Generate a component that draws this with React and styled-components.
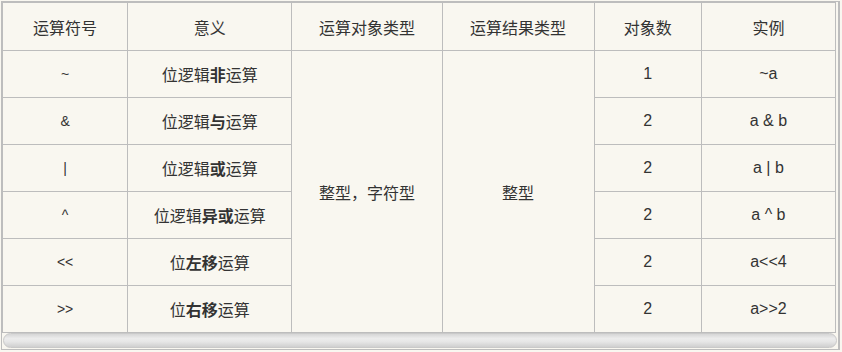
import React from "react";
import styled, { createGlobalStyle } from "styled-components";

const GlobalStyle = createGlobalStyle`
    html, body {
        margin: 0;
        padding: 0;
        background: #f9f7f0;
    }
    body {
        font-family: "Liberation Sans", "Noto Sans CJK SC", sans-serif;
        color: #333;
    }
`;

const columns = [125, 164, 150, 152, 107, 134];

const rows = [
    { op: "~", name: ["位逻辑", "非", "运算"], count: "1", sample: "~a" },
    { op: "&", name: ["位逻辑", "与", "运算"], count: "2", sample: "a & b" },
    { op: "|", name: ["位逻辑", "或", "运算"], count: "2", sample: "a | b" },
    { op: "^", name: ["位逻辑", "异或", "运算"], count: "2", sample: "a ^ b" },
    { op: "<<", name: ["位", "左移", "运算"], count: "2", sample: "a<<4" },
    { op: ">>", name: ["位", "右移", "运算"], count: "2", sample: "a>>2" },
];

const App = () => {
    return (
        <>
            <GlobalStyle />
            <Wrapper>
                <Table>
                    <colgroup>
                        {columns.map((w, i) => (
                            <col key={i} style={{ width: w }} />
                        ))}
                    </colgroup>
                    <thead>
                        <tr>
                            <Head>运算符号</Head>
                            <Head>意义</Head>
                            <Head>运算对象类型</Head>
                            <Head>运算结果类型</Head>
                            <Head>对象数</Head>
                            <Head>实例</Head>
                        </tr>
                    </thead>
                    <tbody>
                        {rows.map((row, i) => (
                            <tr key={row.op}>
                                <Cell small>{row.op}</Cell>
                                <Cell>
                                    {row.name[0]}
                                    <b>{row.name[1]}</b>
                                    {row.name[2]}
                                </Cell>
                                {i === 0 && (
                                    <>
                                        <Cell rowSpan={rows.length}>整型，字符型</Cell>
                                        <Cell rowSpan={rows.length}>整型</Cell>
                                    </>
                                )}
                                <Cell>{row.count}</Cell>
                                <Cell>{row.sample}</Cell>
                            </tr>
                        ))}
                    </tbody>
                </Table>
                <ScrollTrack>
                    <ScrollThumb />
                </ScrollTrack>
            </Wrapper>
        </>
    );
};

const Wrapper = styled.div`
    margin: 1px 0 0 1px;
    width: 836px;
    border: 1px solid #bdbdbd;
    border-right-width: 2px;
    background: #f9f7f0;
`;

const Table = styled.table`
    width: 834px;
    table-layout: fixed;
    border-collapse: collapse;
    border: 1px solid #bdbdbd;
`;

const Head = styled.th`
    height: 47px;
    padding: 0;
    border: 1px solid #bdbdbd;
    font-size: 16px;
    font-weight: normal;
    text-align: center;
    color: #333;
`;

const Cell = styled.td`
    height: 46px;
    padding: 0;
    border: 1px solid #bdbdbd;
    font-size: ${(props) => (props.small ? "14px" : "16px")};
    text-align: center;
    vertical-align: middle;
    color: #333;

    b {
        font-weight: bold;
    }
`;

const ScrollTrack = styled.div`
    height: 16px;
    padding: 0 1px 0 1px;
    box-sizing: border-box;
`;

const ScrollThumb = styled.div`
    height: 15px;
    border: 1px solid #c9c9c9;
    border-radius: 8px;
    box-sizing: border-box;
    background: linear-gradient(
        to bottom,
        #d6d6d6 0%,
        #ececec 35%,
        #e6e6e6 60%,
        #cfcfcf 100%
    );
`;

export default App;
